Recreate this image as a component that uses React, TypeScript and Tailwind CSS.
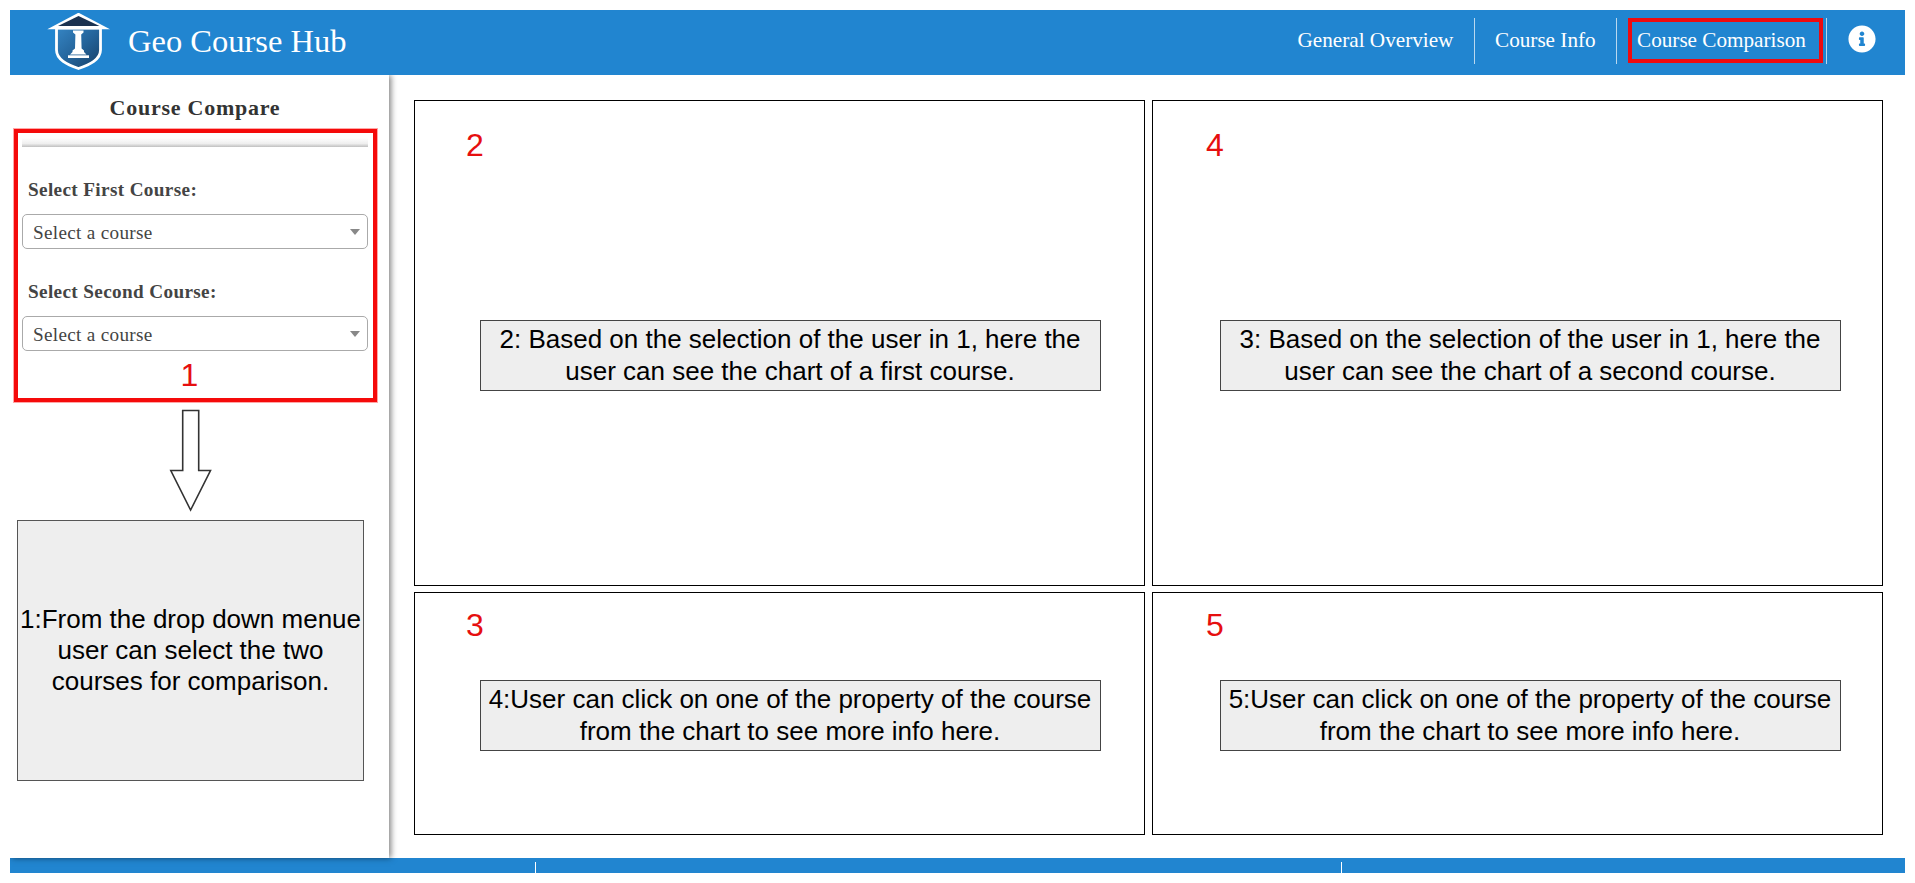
import React from "react";

const sans = "font-['Liberation_Sans',Arial,sans-serif]";

function Logo() {
  return (
    <svg width="64" height="58" viewBox="0 0 64 58" className="block">
      <defs>
        <linearGradient id="shield" x1="0" y1="0" x2="1" y2="1">
          <stop offset="0" stopColor="#3585c4" />
          <stop offset="0.5" stopColor="#24649b" />
          <stop offset="1" stopColor="#173f66" />
        </linearGradient>
      </defs>
      <path d="M9.500 15V37C9.500 46.500 20 51.500 31.500 55.500C43 51.500 53.500 46.500 53.500 37V15Z" fill="url(#shield)" stroke="#fff" strokeWidth="2.800" />
      <path d="M0.300 16.200L31.500 -0.300L63 16.200Z" fill="#fff" />
      <path d="M11 13L31.500 3L52.500 13Z" fill="#1b3250" />
      <path d="M26 17.500H36.500V19.500L34.200 21.500L34.600 35.500L37 37.500V39L39.500 41.500H23L25.500 39V37.500L28 35.500L28.400 21.500L26 19.500Z" fill="#fff" />
      <path d="M21 42.300H42V45H21Z" fill="#fff" />
    </svg>
  );
}

function InfoIcon() {
  return (
    <svg width="28" height="28" viewBox="0 0 512 512" className="block">
      <path
        fill="#fff"
        d="M256 8C119 8 8 119.100 8 256c0 137 111 248 248 248s248-111 248-248C504 119.100 393 8 256 8zm0 110c23.200 0 42 18.800 42 42s-18.800 42-42 42-42-18.800-42-42 18.800-42 42-42zm56 254c0 6.600-5.400 12-12 12h-88c-6.600 0-12-5.400-12-12v-24c0-6.600 5.400-12 12-12h12v-64h-12c-6.600 0-12-5.400-12-12v-24c0-6.600 5.400-12 12-12h64c6.600 0 12 5.400 12 12v100h12c6.600 0 12 5.400 12 12v24z"
      />
    </svg>
  );
}

function CourseSelect({ label }: { label: string }) {
  return (
    <div className="h-[102px]">
      <div className="h-[38px] pt-px pl-[6px] text-[19.2px] leading-[26px] font-bold tracking-[0.36px] text-[#444]">{label}</div>
      <div className="flex h-[35px] items-center justify-between rounded-[5px] border border-[#aaa] bg-white pr-[7px] pl-[10px]">
        <span className="pt-[4px] text-[19.2px] tracking-[0.3px] text-[#444]">Select a course</span>
        <svg width="10" height="6" viewBox="0 0 10 6">
          <path d="M0 0H10L5 6Z" fill="#888" />
        </svg>
      </div>
    </div>
  );
}

function Note({ lines }: { lines: string[] }) {
  return (
    <div className={`flex h-[71px] w-[621px] flex-col items-center justify-center border border-[#444] bg-[#eee] pr-px pb-[2px] text-[26px] leading-[32px] text-black ${sans}`}>
      {lines.map((l) => (
        <div key={l} className="whitespace-nowrap">{l}</div>
      ))}
    </div>
  );
}

function Panel({ num, lines, top, right }: { num: string; lines: string[]; top?: boolean; right?: boolean }) {
  return (
    <section className={`border border-black ${right ? "pl-[53px]" : "pl-[51px]"}`}>
      <div className={`text-[32px] leading-[36px] text-[#e60f0f] ${sans} ${top ? "mt-[26px] mb-[157px]" : "mt-[14px] mb-[37px]"}`}>{num}</div>
      <div className="pl-[14px]">
        <Note lines={lines} />
      </div>
    </section>
  );
}

const nav = "h-[46px] whitespace-nowrap border-r border-[#b9d8ef] text-[21.2px] leading-[44px] text-white";

export default function App() {
  return (
    <div className="h-[883px] w-[1915px] overflow-hidden bg-white p-[10px] font-['Liberation_Serif','Times_New_Roman',serif]">
      <header className="flex h-[65px] justify-between bg-[#2185d0]">
        <div className="flex pt-[3px] pl-[37px]">
          <Logo />
          <h1 className="pl-[17px] text-[32.5px] leading-[56px] whitespace-nowrap text-white">Geo Course Hub</h1>
        </div>
        <nav className="flex pt-[8px]">
          <a className={`${nav} w-[177.500px]`}>General Overview</a>
          <a className={`${nav} w-[142px] pl-[20px]`}>Course Info</a>
          <a className={`${nav} flex w-[210px] pl-[11px]`}>
            <span className="h-[45px] w-[195px] border-4 border-[#ee0a0f] pl-[5px] leading-[36px]">Course Comparison</span>
          </a>
          <span className="w-[78px] pt-[6.500px] pl-[20.500px]">
            <InfoIcon />
          </span>
        </nav>
      </header>

      <div className="flex h-[783px]">
        <aside className="relative w-[379px] bg-white shadow-[2px_0px_6px_rgba(0,0,0,0.5)] [clip-path:inset(0_-12px_-12px_0)]">
          <h2 className="h-[54px] pt-[20px] pr-[9px] text-center text-[22px] leading-[26px] font-bold tracking-[0.75px] text-[#333]">Course Compare</h2>
          <div className="ml-[4px] h-[273px] w-[363px] border-4 border-[#f50a0a] px-[4px] shadow-[0_0_0_1px_rgba(255,0,0,0.35)]">
            <div className="h-[14px] w-[346px] bg-linear-to-b from-white from-35% via-[#efefef] via-75% to-[#c0c0c0]" />
            <div className="w-[346px] pt-[29px]">
              <CourseSelect label="Select First Course:" />
              <CourseSelect label="Select Second Course:" />
            </div>
            <div className={`-mt-[23px] pr-[12px] text-center text-[32px] leading-[36px] text-[#e60f0f] ${sans}`}>1</div>
          </div>
          <svg width="44" height="106" viewBox="0 0 44 106" className="mt-[6px] ml-[159px] block">
            <path d="M13.700 2.500H29.700V62.500H41.500L21.600 102L1.800 62.500H13.700Z" fill="#fff" stroke="#333" strokeWidth="1.600" />
          </svg>
          <div className={`mt-[6px] ml-[7px] flex h-[261px] w-[347px] flex-col items-center justify-center border border-[#555] bg-[#eee] text-[26px] leading-[31px] whitespace-nowrap text-black ${sans}`}>
            <div>1:From the drop down menue</div>
            <div>user can select the two</div>
            <div>courses for comparison.</div>
          </div>
        </aside>
        <main className="grid grid-cols-[731px_731px] grid-rows-[486px_243px] gap-x-[7px] gap-y-[6px] pt-[25px] pl-[25px]">
          <Panel top num="2" lines={["2: Based on the selection of the user in 1, here the", "user can see the chart of a first course."]} />
          <Panel top right num="4" lines={["3: Based on the selection of the user in 1, here the", "user can see the chart of a second course."]} />
          <Panel num="3" lines={["4:User can click on one of the property of the course", "from the chart to see more info here."]} />
          <Panel right num="5" lines={["5:User can click on one of the property of the course", "from the chart to see more info here."]} />
        </main>
      </div>

      <footer className="flex h-[15px] bg-[#2185d0] pt-[4px]">
        <div className="w-[526px] border-r border-white" />
        <div className="w-[806px] border-r border-white" />
      </footer>
    </div>
  );
}
